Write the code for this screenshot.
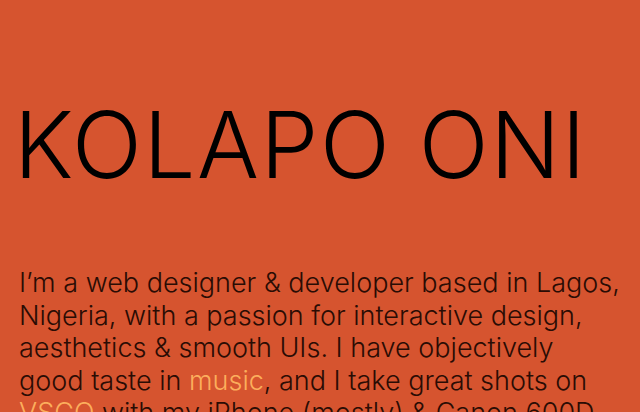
import React from "react";

const links = "text-[#fcae5c]";

export default function App() {
  return (
    <div className="min-h-screen w-full bg-[#d6542f] overflow-hidden font-['Inter',sans-serif]">
      <header className="pl-[14px] pt-[90px]">
        <h1 className="text-[92px] leading-[110px] font-light tracking-[1.6px] text-black whitespace-nowrap">
          KOLAPO ONI
        </h1>
      </header>

      {/* intro */}
      <section className="pl-[19px] pt-[67px] w-[623px]">
        <p className="text-[27px] leading-[32.6px] font-light text-[#2a0c04]">
          I’m a web designer &amp; developer based in Lagos, Nigeria, with a passion for interactive design,
          aesthetics &amp; smooth UIs. I have objectively good taste in{" "}
          <a className={links} href="#">music</a>, and I take great shots on{" "}
          <a className={links} href="#">VSCO</a> with my iPhone (mostly) &amp; Canon 600D.
        </p>
      </section>
    </div>
  );
}
